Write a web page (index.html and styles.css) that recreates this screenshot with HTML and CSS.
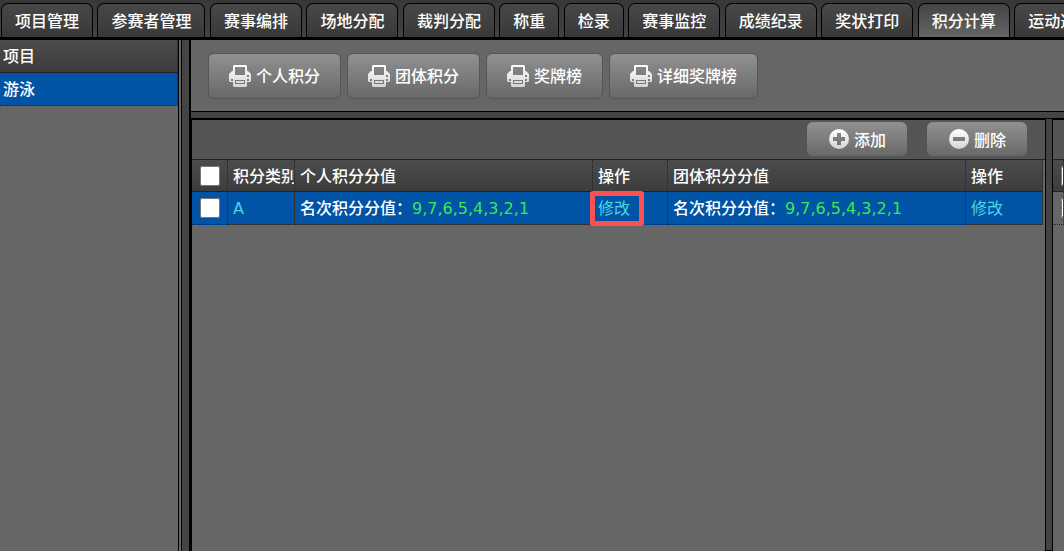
FILE: index.html
```html
<!DOCTYPE html>
<html lang="zh-CN">
<head>
    <meta charset="UTF-8">
    <meta name="viewport" content="width=device-width, initial-scale=1.0">
    <title>积分计算</title>
    <link rel="stylesheet" href="styles.css">
</head>
<body>
    <svg class="sprite" aria-hidden="true">
        <defs>
            <linearGradient id="iconFill" x1="0" y1="0" x2="0" y2="1">
                <stop offset="0" stop-color="#fff"/>
                <stop offset="1" stop-color="#d4d4d4"/>
            </linearGradient>
        </defs>
        <symbol id="printer" viewBox="0 0 22 22">
            <path fill="url(#iconFill)" fill-rule="evenodd" d="M4 1l1-1h12l1 1v5h1l3 3v7l-1 1h-3v4l-1 1H5l-1-1v-4H1l-1-1V9l3-3h1zM6 2v8h10V2zM18 10v2h2v-2zM2 14v2h2v-2zM18 14v2h2v-2zM6 15v4h10v-4z"/>
            <path fill="#dcdcdc" d="M7 16h8v2H7z"/>
        </symbol>
        <symbol id="plus" viewBox="0 0 20 20">
            <path fill="url(#iconFill)" fill-rule="evenodd" d="M10 0a10 10 0 1 1 0 20a10 10 0 1 1 0-20zM8 4v4H4v4h4v4h4v-4h4V8h-4V4z"/>
        </symbol>
        <symbol id="minus" viewBox="0 0 20 20">
            <path fill="url(#iconFill)" fill-rule="evenodd" d="M10 0a10 10 0 1 1 0 20a10 10 0 1 1 0-20zM4 8v4h12V8z"/>
        </symbol>
    </svg>

    <nav class="tabs">
        <a href="#">项目管理</a>
        <a href="#">参赛者管理</a>
        <a href="#">赛事编排</a>
        <a href="#">场地分配</a>
        <a href="#">裁判分配</a>
        <a href="#">称重</a>
        <a href="#">检录</a>
        <a href="#">赛事监控</a>
        <a href="#">成绩纪录</a>
        <a href="#">奖状打印</a>
        <a href="#" class="active">积分计算</a>
        <a href="#">运动选手</a>
    </nav>

    <div class="layout">
        <aside class="sidebar">
            <table class="grid">
                <thead><tr><th>项目</th></tr></thead>
                <tbody><tr class="selected"><td>游泳</td></tr></tbody>
            </table>
        </aside>
        <div class="splitter-left"></div>
        <main class="main">
            <div class="print-bar">
                <button type="button"><svg class="icon-print"><use href="#printer"/></svg><span>个人积分</span></button>
                <button type="button"><svg class="icon-print"><use href="#printer"/></svg><span>团体积分</span></button>
                <button type="button"><svg class="icon-print"><use href="#printer"/></svg><span>奖牌榜</span></button>
                <button type="button"><svg class="icon-print"><use href="#printer"/></svg><span>详细奖牌榜</span></button>
            </div>
            <div class="panels">
                <section class="panel score-panel">
                    <div class="actions">
                        <button type="button"><svg class="icon-round"><use href="#plus"/></svg><span>添加</span></button>
                        <button type="button"><svg class="icon-round"><use href="#minus"/></svg><span>删除</span></button>
                    </div>
                    <div class="grid-wrap">
                        <table class="grid score-grid">
                            <colgroup>
                                <col class="col-check">
                                <col class="col-type">
                                <col class="col-score">
                                <col class="col-op">
                                <col class="col-score">
                                <col class="col-last">
                            </colgroup>
                            <thead>
                                <tr>
                                    <th class="check"><input type="checkbox" aria-label="全选"></th>
                                    <th>积分类别</th>
                                    <th>个人积分分值</th>
                                    <th>操作</th>
                                    <th>团体积分分值</th>
                                    <th>操作</th>
                                </tr>
                            </thead>
                            <tbody>
                                <tr class="selected">
                                    <td class="check"><input type="checkbox" aria-label="选择 A"></td>
                                    <td><a href="#">A</a></td>
                                    <td>名次积分分值：<span class="points">9,7,6,5,4,3,2,1</span></td>
                                    <td class="marked"><a href="#">修改</a></td>
                                    <td>名次积分分值：<span class="points">9,7,6,5,4,3,2,1</span></td>
                                    <td><a href="#">修改</a></td>
                                </tr>
                            </tbody>
                        </table>
                    </div>
                </section>
                <div class="splitter-right"></div>
                <section class="panel side-panel">
                    <div class="actions"></div>
                    <div class="grid-wrap">
                        <table class="grid">
                            <thead><tr><th class="check"><input type="checkbox" aria-label="全选"></th></tr></thead>
                            <tbody><tr><td class="check"><input type="checkbox" aria-label="选择"></td></tr></tbody>
                        </table>
                    </div>
                </section>
            </div>
        </main>
    </div>
</body>
</html>
```

FILE: styles.css
```css
*, *::after { box-sizing: border-box; }
body { margin: 0; height: 100vh; display: flex; flex-direction: column; overflow: hidden; background: #666; color: #fff; font: 500 16px "DejaVu Sans", "Noto Sans CJK SC", sans-serif; }
a { text-decoration: none; }
button { display: flex; align-items: center; color: #fff; font: 500 16px "Noto Sans CJK SC", sans-serif; background: linear-gradient(#919191, #686868); cursor: pointer; }
.sprite { position: absolute; width: 0; height: 0; }

/* top tabs */
.tabs { flex: none; height: 40px; padding: 3px 0 0 1px; white-space: nowrap; overflow: hidden; background: linear-gradient(#383838, #424242); border-bottom: 3px solid #000; font-family: "Liberation Sans", sans-serif; }
.tabs a { display: inline-block; height: 35px; padding: 0 13px; line-height: 32px; color: #fff; font-family: "Noto Sans CJK SC", sans-serif; background: linear-gradient(#484848, #383838); border: 1px solid #000; border-bottom: 0; border-radius: 7px 7px 0 0; }
.tabs a.active { background: linear-gradient(#444, #666); }

.layout { flex: 1; display: flex; min-height: 0; }
.sidebar { width: 179px; flex: none; border-right: 1px solid #000; }
.splitter-left { width: 10px; flex: none; background: #444; border-left: 2px solid #666; box-shadow: inset 1px 0 #000; }
.main { flex: 1; min-width: 0; display: flex; flex-direction: column; border-left: 2px solid #000; }

/* print buttons */
.print-bar { display: flex; gap: 6px; height: 72px; padding: 13px 17px; border-bottom: 1px solid #000; }
.print-bar button { height: 46px; padding: 0 20px; gap: 5px; border: 1px solid #555; border-radius: 6px; }
.print-bar span { padding-bottom: 2px; }
.icon-print { width: 22px; height: 22px; }

/* panels */
.panels { flex: 1; display: flex; min-height: 0; border-top: 6px solid #444; }
.panel { border-top: 2px solid #000; min-width: 0; overflow: hidden; }
.score-panel { flex: 1; border-left: 1px solid #000; }
.side-panel { width: 11px; flex: none; }
.splitter-right { width: 8px; flex: none; background: #444; border: 1px solid #000; }
.actions { display: flex; justify-content: flex-end; gap: 20px; height: 40px; padding: 2px 18px 3px; background: #555; border-bottom: 1px solid #222; }
.actions button { padding: 0 21px 0 22px; gap: 5px; border: 0; border-radius: 6px; }
.icon-round { width: 20px; height: 20px; }

/* grids */
.grid { width: 100%; table-layout: fixed; border-collapse: separate; border-spacing: 0; }
.grid th, .grid td { padding: 2px 5px 0; text-align: left; font-weight: 500; white-space: nowrap; overflow: hidden; border-right: 1px dotted #222; }
.grid th { height: 32px; line-height: 29px; background: linear-gradient(#4c4c4c, #3c3c3c); border-bottom: 1px solid #222; }
.grid td { height: 33px; line-height: 30px; border-bottom: 1px dotted #222; }
.sidebar .grid th, .sidebar .grid td { height: 33px; padding: 1px 3px 0; }
.selected td { background: #0053a5; }
.grid a { color: #4cd3e6; font-weight: normal; }
.grid .check { padding: 0 8px; }
.check input { display: block; width: 20px; height: 20px; margin: 0; }
.points { color: #3ee655; }
.score-grid { width: 851px; }
.col-check { width: 36px; }
.col-type { width: 67px; }
.col-score { width: 298px; }
.col-op { width: 75px; }
.col-last { width: 77px; }
.grid .marked { position: relative; overflow: visible; }
.marked::after { content: ""; position: absolute; left: -3px; top: -1px; width: 54px; height: 35px; border: 5px solid #fb5153; border-radius: 3px; }
```
